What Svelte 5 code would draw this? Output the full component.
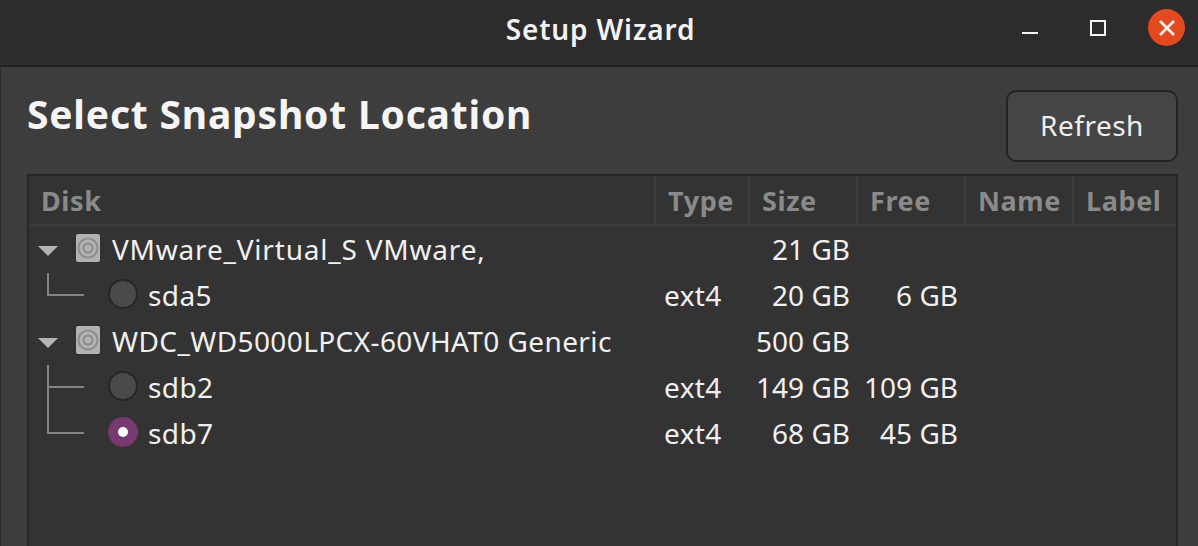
<script>
    const columns = ['Disk', 'Type', 'Size', 'Free', 'Name', 'Label'];

    const disks = [
        {
            name: 'VMware_Virtual_S VMware,',
            wide: true,
            size: '21 GB',
            parts: [{ name: 'sda5', type: 'ext4', size: '20 GB', free: '6 GB', last: true }]
        },
        {
            name: 'WDC_WD5000LPCX-60VHAT0 Generic',
            size: '500 GB',
            parts: [
                { name: 'sdb2', type: 'ext4', size: '149 GB', free: '109 GB' },
                { name: 'sdb7', type: 'ext4', size: '68 GB', free: '45 GB', last: true, selected: true }
            ]
        }
    ];

    // tree guide: first child starts just under the disk icon
    function guidePath(part, i) {
        const top = i === 0 ? 2 : 0;
        return part.last ? `M1 ${top} V24 H37` : `M1 ${top} V46 M1 24 H37`;
    }
</script>

<main>
    <header class="titlebar">
        <span class="window-title">Setup Wizard</span>
        <div class="window-buttons">
            <svg class="win-icon minimize" width="18" height="18" viewBox="0 0 18 18"><rect x="1" y="13" width="16" height="2" fill="#f4f4f4" /></svg>
            <svg class="win-icon maximize" width="18" height="18" viewBox="0 0 18 18"><rect x="2" y="2" width="14" height="14" fill="none" stroke="#f4f4f4" stroke-width="2" /></svg>
            <span class="close">
                <svg width="18" height="18" viewBox="0 0 18 18"><path d="M2 2 L16 16 M16 2 L2 16" stroke="#f6f0ec" stroke-width="2.8" /></svg>
            </span>
        </div>
    </header>

    <section class="content">
        <div class="top">
            <h1>Select Snapshot Location</h1>
            <button class="refresh">Refresh</button>
        </div>

        <div class="tree">
            <div class="row head">
                {#each columns as col}
                    <div class="th">{col}</div>
                {/each}
            </div>
            {#each disks as disk}
                <div class="row item">
                    <div class="cell name" class:wide={disk.wide}>
                        <svg class="expander" width="20" height="10" viewBox="0 0 20 10"><path d="M0 0 H20 L10 10 Z" fill="#b4b4b4" /></svg>
                        <svg class="disk" width="24" height="28" viewBox="0 0 24 28">
                            <rect x="0" y="0" width="24" height="28" rx="2" fill="#b2b2b2" />
                            <circle cx="12" cy="14" r="9.5" fill="none" stroke="#8e8e8e" stroke-width="2" />
                            <circle cx="12" cy="14" r="4.5" fill="none" stroke="#8a8a8a" stroke-width="2" />
                        </svg>
                        <span>{disk.name}</span>
                    </div>
                    <div class="cell"></div>
                    <div class="cell num">{disk.size}</div>
                    <div class="cell"></div>
                    <div class="cell"></div>
                    <div class="cell"></div>
                </div>
                {#each disk.parts as part, i}
                    <div class="row item">
                        <div class="cell name">
                            <svg class="guide" width="38" height="46" viewBox="0 0 38 46">
                                <path d={guidePath(part, i)} fill="none" stroke="#858585" stroke-width="2" />
                            </svg>
                            <span class="radio" class:selected={part.selected}></span>
                            <span>{part.name}</span>
                        </div>
                        <div class="cell type">{part.type}</div>
                        <div class="cell num">{part.size}</div>
                        <div class="cell num">{part.free}</div>
                        <div class="cell"></div>
                        <div class="cell"></div>
                    </div>
                {/each}
            {/each}
        </div>
    </section>
</main>

<style>
    :global(body) {
        margin: 0;
        background: #3d3d3d;
        overflow: hidden;
    }

    main {
        width: 1198px;
        height: 546px;
        display: flex;
        flex-direction: column;
        overflow: hidden;
        font-family: "Noto Sans", "Open Sans", sans-serif;
        color: #f0f0f0;
    }

    .titlebar {
        position: relative;
        height: 65px;
        flex: none;
        display: flex;
        align-items: center;
        justify-content: center;
        background: #2c2c2c;
        border-bottom: 2px solid #222;
    }

    .window-title {
        font-size: 28px;
        font-weight: 600;
        letter-spacing: 0.85px;
        color: #f2f2f2;
        padding: 0 0 7px 3px;
    }

    .window-buttons {
        position: absolute;
        right: 13px;
        top: 9px;
        display: flex;
        align-items: flex-start;
    }

    .win-icon {
        display: block;
        margin-top: 10px;
    }

    .minimize {
        margin-right: 50px;
    }

    .maximize {
        margin-right: 41px;
    }

    .close {
        width: 37px;
        height: 37px;
        border-radius: 50%;
        background: #e2491f;
        display: flex;
        align-items: center;
        justify-content: center;
    }

    .content {
        flex: 1;
        display: flex;
        flex-direction: column;
        padding: 23px 20px 0 26px;
        border-left: 1px solid #2a2a2a;
        background: #3d3d3d;
        min-height: 0;
    }

    .top {
        display: flex;
        justify-content: space-between;
        align-items: flex-start;
        height: 84px;
        flex: none;
    }

    h1 {
        margin: 0;
        font-size: 39px;
        font-weight: 700;
        letter-spacing: 0.8px;
        line-height: 48px;
        color: #f5f5f5;
    }

    .refresh {
        width: 172px;
        height: 72px;
        border: 2px solid #242424;
        border-radius: 10px;
        background: #454545;
        color: #eeeeee;
        font: inherit;
        font-size: 28px;
        letter-spacing: 0.5px;
        padding: 0 0 2px;
    }

    .tree {
        flex: 1;
        border: 2px solid #262626;
        border-bottom: none;
        background: #333333;
        min-height: 0;
    }

    .row {
        display: grid;
        grid-template-columns: 625px 94px 108px 108px 108px 1fr;
    }

    .head {
        height: 48px;
        margin-bottom: -1px;
        border-bottom: 2px solid #3b3b3b;
    }

    .th {
        display: flex;
        align-items: center;
        padding-left: 12px;
        font-size: 27px;
        font-weight: 700;
        letter-spacing: 0.6px;
        color: #8a8a8a;
        border-left: 2px solid #3b3b3b;
    }

    .th:first-child {
        border-left: none;
    }

    .item {
        height: 46px;
    }

    .cell {
        display: flex;
        align-items: center;
        font-size: 28px;
        white-space: nowrap;
        padding-top: 2px;
    }

    .name {
        padding-left: 9px;
        letter-spacing: 0.4px;
    }

    .name.wide {
        letter-spacing: 0.8px;
    }

    .expander {
        margin-right: 18px;
        margin-top: 4px;
        flex: none;
    }

    .disk {
        margin-right: 12px;
        margin-bottom: 2px;
        flex: none;
    }

    .guide {
        flex: none;
        align-self: flex-start;
        margin: -2px 23px 0 9px;
    }

    .radio {
        width: 26px;
        height: 26px;
        border-radius: 50%;
        border: 2px solid #262626;
        background: #4a4a4a;
        margin-right: 10px;
        margin-bottom: 2px;
        flex: none;
        position: relative;
    }

    .radio.selected {
        background: #77396f;
        border-color: #77396f;
    }

    .radio.selected::after {
        content: '';
        position: absolute;
        left: 8px;
        top: 8px;
        width: 10px;
        height: 10px;
        border-radius: 50%;
        background: #fff;
    }

    .type {
        padding-left: 10px;
        letter-spacing: 0.4px;
    }

    .num {
        justify-content: flex-end;
        padding-right: 6px;
    }
</style>
